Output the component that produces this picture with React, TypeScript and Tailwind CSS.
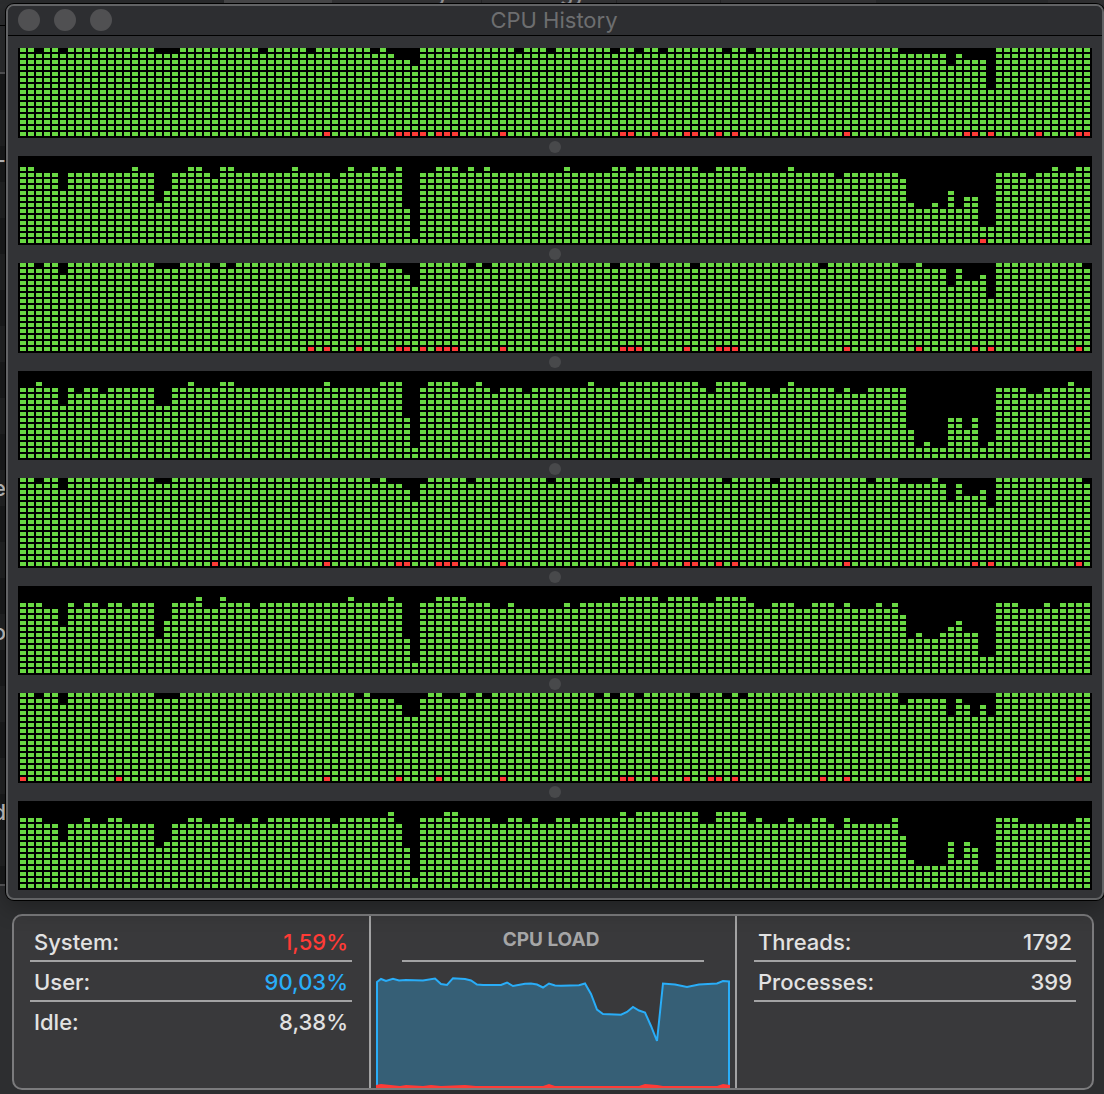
const COLUMNS = 134;

type Step = [start: number, level: number];
type Core = { steps: Step[]; system: number[] };

// Each step holds its level until the next one starts.
const CORES: Core[] = [
  {
    steps: [[0, 15], [2, 14], [3, 15], [5, 14], [6, 15], [17, 14], [20, 15], [30, 14], [31, 15], [36, 14], [37, 15], [44, 14], [45, 15], [46, 14], [47, 13], [49, 12], [50, 15], [62, 14], [63, 15], [66, 14], [67, 15], [74, 14], [75, 15], [77, 14], [78, 15], [80, 14], [81, 15], [88, 14], [89, 15], [91, 14], [92, 15], [110, 14], [116, 12], [117, 14], [118, 13], [121, 8], [122, 15]],
    system: [38, 47, 48, 49, 50, 52, 53, 54, 60, 75, 76, 79, 83, 84, 87, 89, 103, 118, 119, 121, 127, 132, 133],
  },
  {
    steps: [[0, 13], [2, 12], [5, 9], [6, 12], [14, 13], [15, 12], [17, 7], [18, 9], [19, 12], [21, 13], [23, 12], [24, 11], [25, 13], [27, 12], [34, 13], [35, 12], [39, 11], [40, 12], [41, 13], [42, 12], [44, 13], [46, 12], [47, 13], [48, 6], [49, 1], [50, 12], [52, 13], [55, 12], [56, 13], [57, 12], [58, 13], [59, 12], [68, 13], [69, 12], [74, 13], [76, 12], [77, 13], [85, 12], [87, 13], [91, 12], [96, 13], [97, 12], [102, 11], [103, 12], [110, 11], [111, 7], [112, 6], [114, 7], [115, 6], [116, 9], [117, 6], [118, 8], [120, 3], [122, 12], [126, 11], [127, 12], [129, 13], [130, 12], [132, 13]],
    system: [120],
  },
  {
    steps: [[0, 15], [2, 14], [3, 15], [5, 13], [6, 15], [17, 14], [20, 15], [24, 14], [25, 15], [26, 14], [27, 15], [44, 14], [45, 15], [46, 14], [48, 13], [49, 11], [50, 15], [56, 14], [57, 15], [58, 14], [59, 15], [74, 14], [75, 15], [79, 14], [80, 15], [84, 14], [85, 15], [100, 14], [101, 15], [110, 14], [112, 15], [113, 14], [116, 11], [117, 14], [118, 12], [120, 13], [121, 9], [122, 15], [133, 14]],
    system: [36, 38, 42, 47, 48, 50, 52, 53, 54, 60, 75, 76, 77, 83, 87, 88, 89, 103, 112, 119, 121, 132],
  },
  {
    steps: [[0, 12], [2, 13], [3, 12], [5, 9], [6, 12], [7, 11], [8, 12], [10, 11], [11, 12], [17, 9], [19, 12], [21, 13], [22, 12], [25, 13], [27, 12], [38, 13], [39, 12], [45, 13], [48, 7], [49, 2], [50, 12], [51, 13], [55, 12], [57, 13], [58, 12], [59, 11], [60, 12], [63, 11], [64, 12], [71, 13], [72, 12], [75, 13], [85, 12], [86, 11], [87, 13], [91, 12], [94, 11], [95, 12], [96, 13], [97, 12], [102, 11], [103, 12], [104, 11], [106, 12], [111, 5], [112, 2], [113, 3], [114, 2], [116, 7], [118, 5], [119, 7], [120, 2], [121, 3], [122, 12], [126, 11], [128, 12], [131, 13], [132, 12]],
    system: [],
  },
  {
    steps: [[0, 15], [2, 14], [3, 15], [5, 13], [6, 15], [17, 14], [19, 15], [44, 14], [45, 15], [46, 14], [48, 13], [49, 11], [50, 14], [51, 15], [56, 14], [57, 15], [66, 14], [67, 15], [74, 14], [75, 15], [77, 14], [78, 15], [88, 14], [89, 15], [94, 14], [95, 15], [106, 14], [107, 15], [110, 14], [114, 15], [115, 14], [116, 11], [117, 14], [118, 12], [120, 13], [121, 10], [122, 15], [133, 14]],
    system: [24, 38, 47, 48, 52, 53, 54, 60, 75, 76, 79, 83, 84, 87, 89, 103, 119, 121, 132],
  },
  {
    steps: [[0, 12], [3, 11], [5, 8], [6, 12], [7, 11], [8, 12], [10, 11], [11, 12], [13, 11], [14, 12], [17, 6], [18, 9], [19, 12], [22, 13], [23, 11], [25, 13], [26, 12], [29, 11], [30, 12], [41, 13], [42, 12], [46, 13], [47, 12], [48, 6], [49, 2], [50, 12], [52, 13], [56, 12], [59, 11], [61, 12], [62, 11], [68, 12], [69, 11], [70, 12], [75, 13], [80, 12], [81, 13], [85, 12], [87, 13], [91, 12], [92, 11], [94, 12], [97, 11], [99, 12], [102, 11], [103, 12], [104, 11], [107, 12], [108, 11], [109, 12], [110, 10], [111, 6], [112, 7], [113, 6], [115, 7], [116, 8], [117, 9], [118, 7], [120, 3], [122, 12], [125, 11], [128, 12], [129, 11], [130, 12]],
    system: [],
  },
  {
    steps: [[0, 15], [2, 14], [3, 15], [5, 13], [6, 15], [17, 14], [20, 15], [42, 14], [43, 15], [44, 14], [47, 13], [48, 11], [50, 14], [51, 15], [53, 14], [55, 15], [56, 14], [57, 15], [58, 14], [59, 15], [72, 14], [73, 15], [74, 14], [75, 15], [77, 14], [78, 15], [84, 14], [85, 15], [88, 14], [89, 15], [90, 14], [91, 15], [110, 13], [111, 14], [116, 11], [117, 14], [118, 13], [119, 11], [120, 13], [121, 11], [122, 15]],
    system: [0, 12, 38, 47, 52, 60, 75, 76, 79, 83, 86, 87, 89, 100, 103, 132],
  },
  {
    steps: [[0, 12], [3, 11], [5, 8], [6, 11], [8, 12], [9, 11], [11, 12], [13, 11], [17, 7], [18, 8], [19, 11], [21, 12], [23, 11], [25, 12], [27, 11], [29, 12], [30, 11], [31, 12], [39, 11], [40, 12], [46, 13], [47, 11], [48, 7], [49, 2], [50, 12], [53, 13], [55, 12], [59, 11], [61, 12], [63, 11], [64, 12], [65, 11], [67, 12], [69, 11], [70, 12], [75, 13], [76, 12], [77, 13], [85, 11], [87, 13], [91, 11], [92, 12], [93, 11], [96, 12], [97, 11], [99, 12], [101, 11], [102, 10], [103, 12], [104, 11], [109, 12], [110, 9], [111, 5], [112, 4], [116, 8], [117, 5], [118, 8], [119, 7], [120, 3], [122, 12], [125, 11], [132, 12]],
    system: [],
  },
];

function corePaths({ steps, system }: Core, height: number) {
  let user = "";
  let sys = "";
  steps.forEach(([start, level], n) => {
    const end = n + 1 < steps.length ? steps[n + 1][0] : COLUMNS;
    for (let col = start; col < end; col++) {
      for (let row = 0; row < level; row++) {
        const cell = `M${2 + col * 8} ${height - 6 - row * 6}h6v4h-6z`;
        if (row === 0 && system.includes(col)) sys += cell;
        else user += cell;
      }
    }
  });
  return { user, sys };
}

function CoreHistory({ core, index }: { core: Core; index: number }) {
  const tall = index % 2 === 0;
  const height = tall ? 90 : 89;
  const { user, sys } = corePaths(core, height);
  return (
    <svg
      role="img"
      aria-label={`Core ${index + 1}`}
      className={tall ? "block h-[90px] w-full bg-black" : "block h-[89px] w-full bg-black"}
      viewBox={`0 0 1074 ${height}`}
      preserveAspectRatio="none"
      shapeRendering="crispEdges"
    >
      <path d={user} fill="#69d843" />
      <path d={sys} fill="#ff3b36" />
    </svg>
  );
}

function Stat({ label, value, tone, line }: { label: string; value: string; tone: string; line: boolean }) {
  return (
    <div className={line ? "flex h-10 items-center justify-between border-b-2 border-[#a3a3a4] px-1 pt-[2px]" : "flex h-10 items-center justify-between px-1"}>
      <dt className="text-[#e2e2e2]">{label}</dt>
      <dd className={tone}>{value}</dd>
    </div>
  );
}

function LoadChart() {
  return (
    <svg role="img" aria-label="CPU load over time" className="block h-[112px] w-full" viewBox="0 0 354 112" preserveAspectRatio="none">
      <path
        d="M1 112V6L5 3L10 5L17 2.700L23 4.500L30 4L47 4.500L59 2.500L65 8L71 9L77 2.200L89 3L95 4.500L101 8.500L107 9L125 9L131 6.500L137 10L149 7.700L155 7.500L161 8.500L167 11.500L173 7.500L179 9.500L185 9.700L203 9.300L209 7.500L215 18L221 33.500L227 38L245 38.700L251 36L257 31L263 34.500L269 36.500L275 50L281 65L287 7.500L299 8.500L311 11L323 8.500L341 7.500L347 5L353 5.500V112"
        fill="#365f76"
        stroke="#29adf8"
        strokeWidth="2"
      />
      <path d="M0 112V109L5 108L24 110L30 109L47 110L55 109L65 110L89 109L100 110L155 110L167 110L173 108L179 110L263 110L269 108L281 109L287 110L341 110L347 108L354 109V112Z" fill="#ff3b36" />
    </svg>
  );
}

function Sliver({ className, children }: { className: string; children: string }) {
  return (
    <span className={`absolute left-0 flex w-[6px] justify-end overflow-hidden text-[22px] font-medium leading-6 text-[#c8c8c8] ${className}`}>
      <span>{children}</span>
    </span>
  );
}

export default function App() {
  return (
    <main className="relative flex min-h-[1094px] w-full flex-col overflow-hidden bg-[#2d2e30] font-['Inter','Liberation_Sans',sans-serif]">
      <div aria-hidden="true" className="absolute left-0 top-[72px] h-[814px] w-[6px] border-y-2 border-[#58585a] bg-[repeating-linear-gradient(#1b1c1d_0px,#1b1c1d_36px,#232425_36px,#232425_72px)]" />
      <div aria-hidden="true" className="absolute left-0 top-[25px] h-px w-[6px] bg-black" />
      <div aria-hidden="true" className="absolute left-0 top-0 flex h-1 w-full items-end overflow-hidden bg-[#2c2d2f] text-[22px] font-medium leading-6 text-[#9a9a9c]">
        <span className="ml-[224px] h-1 w-[108px] bg-[#4b4b4d]" />
        <span className="flex h-6 w-[150px] justify-end border-r border-[#29292b] bg-[#363638] pr-8">y</span>
        <span className="flex h-6 w-[135px] justify-end border-r border-[#29292b] bg-[#363638] pr-[30px]">gy</span>
        <span className="h-1 w-[104px] border-r border-[#29292b] bg-[#363638]" />
        <span className="h-1 w-[155px] bg-[#363638]" />
        <span className="ml-[172px] h-1 w-14 bg-[#323234]" />
      </div>
      <Sliver className="top-[148px]">-</Sliver>
      <Sliver className="top-[476px]">e</Sliver>
      <Sliver className="top-[620px]">o</Sliver>
      <Sliver className="top-[800px]">d</Sliver>

      <section className="relative ml-[6px] mt-1 rounded-lg border-2 border-[#626365] bg-[#323336] shadow-[0_0_0_1px_#000,0_6px_24px_#0005]">
        <header className="relative flex h-[30px] items-center justify-center rounded-t-md border-b border-black bg-[#2d2e31] pb-[2px] pr-[2px]">
          <div className="absolute left-[10px] top-[3px] flex gap-[14px]">
            <button type="button" aria-label="Close" className="size-[22px] rounded-full bg-[#505052]" />
            <button type="button" aria-label="Minimize" className="size-[22px] rounded-full bg-[#505052]" />
            <button type="button" aria-label="Zoom" className="size-[22px] rounded-full bg-[#505052]" />
          </div>
          <h1 className="text-[22px] leading-7 text-[#6d6e70]">CPU History</h1>
        </header>
        <div className="px-[10px] pb-2 pt-3">
          {CORES.map((core, i) => (
            <div key={i}>
              {i > 0 && (
                <div className="flex h-[18px] items-center justify-center">
                  <span className="size-3 rounded-full bg-[#48494b]" />
                </div>
              )}
              <CoreHistory core={core} index={i} />
            </div>
          ))}
        </div>
      </section>

      <section className="ml-3 mr-[10px] mt-[14px] grid h-[176px] grid-cols-[355fr_368fr_355fr] overflow-hidden rounded-[10px] border-2 border-[#7b7b7d] bg-[#39393b] text-[22px] font-medium leading-7">
        <dl className="pl-4 pr-[17px] pt-[6px]">
          <Stat label="System:" value="1,59%" tone="text-[#ff3b36]" line />
          <Stat label="User:" value="90,03%" tone="text-[#29adf8]" line />
          <Stat label="Idle:" value="8,38%" tone="text-[#e2e2e2]" line={false} />
        </dl>
        <div className="flex flex-col border-x-2 border-[#a3a3a4] px-[5px]">
          <h2 className="mx-[26px] flex h-[46px] items-center justify-center border-b-2 border-[#a3a3a4] pr-1 pt-1 text-[19px] font-bold leading-6 text-[#a6a6a7]">CPU LOAD</h2>
          <div className="mt-auto">
            <LoadChart />
          </div>
        </div>
        <dl className="pl-[17px] pr-4 pt-[6px]">
          <Stat label="Threads:" value="1792" tone="text-[#e2e2e2]" line />
          <Stat label="Processes:" value="399" tone="text-[#e2e2e2]" line />
        </dl>
      </section>
    </main>
  );
}
